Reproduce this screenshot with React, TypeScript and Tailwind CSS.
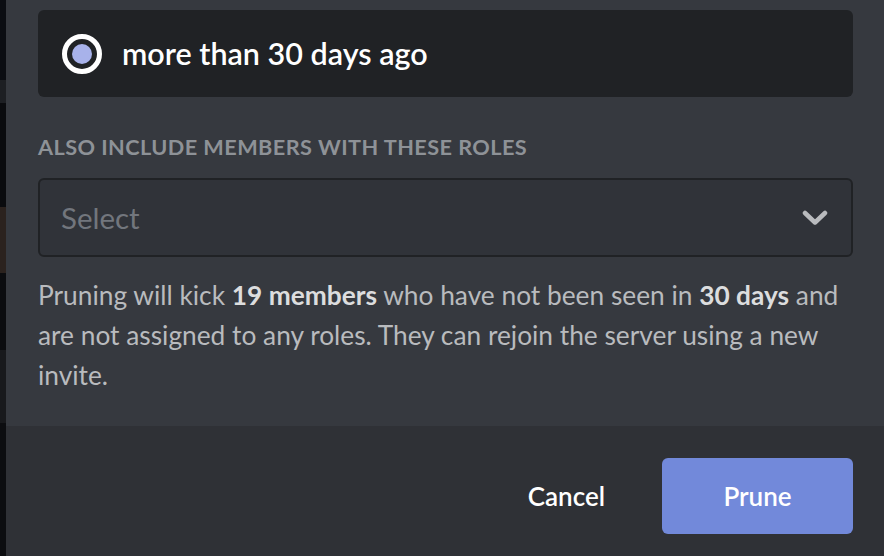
const font = { fontFamily: "Lato, 'Noto Sans', sans-serif" };

function Chevron() {
  return (
    <svg width="26" height="16" viewBox="0 0 26 16" fill="none" className="text-[#b9bbbe]">
      <polyline points="3,3 13,12.5 23,3" stroke="currentColor" strokeWidth="4.5" strokeLinecap="round" strokeLinejoin="round" />
    </svg>
  );
}

export default function App() {
  return (
    <div className="flex h-[556px] w-[884px] overflow-hidden bg-[#0c0d10]" style={font}>
      {/* blurred app behind the modal */}
      <div className="flex w-[6px] shrink-0 flex-col">
        <div className="h-[80px] bg-[#0b0d12]" />
        <div className="h-[23px] bg-[#1d1f23]" />
        <div className="h-[104px] bg-[#0a0b0e]" />
        <div className="h-[66px] bg-[#2b221e]" />
        <div className="h-[77px] bg-[#0b0c0f]" />
        <div className="h-[73px] bg-[#18191c]" />
        <div className="flex-1 bg-[#0c0d10]" />
      </div>

      <div className="flex flex-1 flex-col bg-[#36393f]">
        <div className="flex flex-1 flex-col pl-[32px] pr-[31px] pt-[10px]">
          <div className="flex h-[87px] items-center rounded-[6px] bg-[#202225] pl-[24px]">
            <span className="flex h-[40px] w-[40px] items-center justify-center rounded-full border-[5px] border-white">
              <span className="h-[20px] w-[20px] rounded-full bg-[#a8b2ea]" />
            </span>
            <span className="ml-[20px] text-[30.5px] font-semibold leading-none text-white">more than 30 days ago</span>
          </div>

          <h3 className="mt-[38px] text-[21.7px] font-bold uppercase leading-[24px] tracking-[0.02em] text-[#8e9297]">
            Also include members with these roles
          </h3>

          <div className="mt-[19px] flex h-[79px] items-center justify-between rounded-[6px] border-2 border-[#202225] bg-[#303339] pl-[21px] pr-[23px]">
            <span className="text-[29.5px] leading-none text-[#72767d]">Select</span>
            <Chevron />
          </div>

          <p className="mt-[18px] text-[26.3px] leading-[40px] text-[#b9bbbe]">
            Pruning will kick <strong className="font-bold text-[#dcddde]">19 members</strong> who have not been seen in{" "}
            <strong className="font-bold text-[#dcddde]">30 days</strong> and are not assigned to any roles. They can rejoin the
            server using a new invite.
          </p>
        </div>

        <div className="flex h-[130px] items-start justify-end bg-[#2f3136] pr-[31px] pt-[32px]">
          <button className="h-[76px] px-[28px] text-[26px] font-semibold text-white">Cancel</button>
          <button className="ml-[29px] h-[76px] w-[191px] rounded-[6px] bg-[#7289da] text-[26px] font-semibold text-white">
            Prune
          </button>
        </div>
      </div>
    </div>
  );
}
